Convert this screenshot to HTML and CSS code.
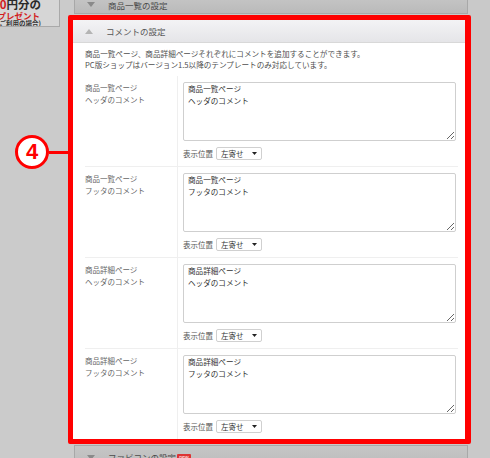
FILE: index.html
```html
<!DOCTYPE html>
<html lang="ja">
<head>
    <meta charset="UTF-8">
    <title>コメントの設定</title>
    <link rel="stylesheet" href="styles.css">
</head>
<body>
    <div class="page">
        <aside class="side">
            <div class="banner">
                <p class="b1"><span class="red">0</span>円分の</p>
                <p class="b2">プレゼント</p>
                <p class="b3">ご利用の場合)</p>
            </div>
        </aside>

        <main class="main">
            <div class="bar bar-top">
                <svg class="tri" width="8" height="5" viewBox="0 0 8 5"><path d="M0 0H8L4 5Z"/></svg>
                <span>商品一覧の設定</span>
            </div>

            <section class="focus">
                <div class="sec-head">
                    <svg class="tri up" width="8" height="5" viewBox="0 0 8 5"><path d="M0 5H8L4 0Z"/></svg>
                    <span>コメントの設定</span>
                </div>
                <div class="sec-body">
                    <p class="desc">商品一覧ページ、商品詳細ページそれぞれにコメントを追加することができます。<br>PC版ショップはバージョン1.5以降のテンプレートのみ対応しています。</p>

                    <div class="rows">
                        <div class="row">
                            <div class="label">商品一覧ページ<br>ヘッダのコメント</div>
                            <div class="field">
                                <textarea>商品一覧ページ
ヘッダのコメント</textarea>
                                <div class="pos">表示位置 <div class="select">左寄せ <svg width="5" height="3" viewBox="0 0 5 3"><path d="M0 0H5L2.5 3Z"/></svg></div></div>
                            </div>
                        </div>
                        <div class="row">
                            <div class="label">商品一覧ページ<br>フッタのコメント</div>
                            <div class="field">
                                <textarea>商品一覧ページ
フッタのコメント</textarea>
                                <div class="pos">表示位置 <div class="select">左寄せ <svg width="5" height="3" viewBox="0 0 5 3"><path d="M0 0H5L2.5 3Z"/></svg></div></div>
                            </div>
                        </div>
                        <div class="row">
                            <div class="label">商品詳細ページ<br>ヘッダのコメント</div>
                            <div class="field">
                                <textarea>商品詳細ページ
ヘッダのコメント</textarea>
                                <div class="pos">表示位置 <div class="select">左寄せ <svg width="5" height="3" viewBox="0 0 5 3"><path d="M0 0H5L2.5 3Z"/></svg></div></div>
                            </div>
                        </div>
                        <div class="row">
                            <div class="label">商品詳細ページ<br>フッタのコメント</div>
                            <div class="field">
                                <textarea>商品詳細ページ
フッタのコメント</textarea>
                                <div class="pos">表示位置 <div class="select">左寄せ <svg width="5" height="3" viewBox="0 0 5 3"><path d="M0 0H5L2.5 3Z"/></svg></div></div>
                            </div>
                        </div>
                    </div>
                </div>
            </section>

            <div class="bar">
                <svg class="tri" width="8" height="5" viewBox="0 0 8 5"><path d="M0 0H8L4 5Z"/></svg>
                <span>ファビコンの設定</span><span class="new">new</span>
            </div>
        </main>
    </div>

    <div class="callout">
        <div class="num">4</div>
        <div class="line"></div>
    </div>
</body>
</html>
```

FILE: styles.css
```css
body {
    margin: 0;
    width: 490px;
    height: 458px;
    overflow: hidden;
    background-color: #c9c9c9;
    font-family: "Noto Sans CJK JP", "Noto Sans", sans-serif;
    position: relative;
}
p {
    margin: 0;
}
.page {
    display: grid;
    grid-template-columns: 74px 394px 22px;
}
.side {
    background-color: #cbcbcb;
    overflow: hidden;
}
.banner {
    width: 80px;
    height: 27px;
    margin-left: -20px;
    padding-right: 18px;
    box-sizing: border-box;
    background-color: #d6d6d6;
    border-right: 1px solid #a9a9a9;
    border-bottom: 1px solid #a9a9a9;
    overflow: hidden;
    white-space: nowrap;
    text-align: right;
    font-weight: bold;
    color: #2a2a2a;
}
.b1 {
    font-size: 11.5px;
    line-height: 11px;
    margin-top: -1px;
}
.b2 {
    font-size: 8.5px;
    line-height: 10px;
    color: #d21c1c;
    padding-right: 1px;
}
.b3 {
    font-size: 6.5px;
    line-height: 7px;
    color: #333;
}
.red {
    color: #d21c1c;
}
.main {
    display: flex;
    flex-direction: column;
}
.bar {
    height: 22px;
    display: flex;
    align-items: center;
    background: linear-gradient(#c6c6c6, #bababa);
    border: 1px solid #a8a8a8;
    border-bottom: none;
    font-size: 8.5px;
    color: #4a4a4a;
    padding-left: 12px;
    margin-top: 1px;
}
.bar-top {
    height: 17px;
    margin-top: -4px;
    border-top: none;
    border-bottom: 1px solid #a8a8a8;
}
.tri {
    fill: #8a8a8a;
    margin-right: 13px;
}
.tri.up {
    fill: #b4b4b4;
}
.new {
    display: inline-block;
    font-size: 5px;
    line-height: 6px;
    padding: 0 2px;
    margin-left: 1px;
    background-color: #d33;
    color: #fff;
    border-radius: 1px;
}
.focus {
    margin: 1px -3px 0 -6px;
    border: 5px solid #ff0000;
    border-right-width: 6px;
    background-color: #fff;
    border-radius: 2px;
}
.sec-head {
    height: 22px;
    display: flex;
    align-items: center;
    padding-left: 12px;
    background: linear-gradient(#f3f3f5, #e5e5e8);
    border-bottom: 1px solid #d8d8d8;
    font-size: 8.5px;
    color: #555;
}
.sec-body {
    padding: 5px 7px 0 12px;
}
.desc {
    font-size: 7.6px;
    line-height: 11px;
    color: #4e4e4e;
    margin-bottom: 6px;
}
.row {
    display: grid;
    grid-template-columns: 92px 1fr;
    border-bottom: 1px solid #efefef;
}
.row:last-child {
    border-bottom: none;
}
.label {
    font-size: 7.5px;
    line-height: 12px;
    color: #666;
    padding-top: 6px;
}
.field {
    border-left: 1px solid #efefef;
    padding: 6px 2px 6px 5px;
}
textarea {
    display: block;
    width: 273px;
    height: 59px;
    box-sizing: border-box;
    margin: 0;
    padding: 0 4px;
    border: 1px solid #cfcfcf;
    border-radius: 2px;
    font-family: "Noto Sans CJK JP", "Noto Sans", sans-serif;
    font-size: 7.6px;
    line-height: 12px;
    color: #333;
}
.pos {
    display: flex;
    align-items: center;
    gap: 3px;
    margin-top: 6px;
    font-size: 7.5px;
    color: #555;
}
.select {
    width: 46px;
    height: 13px;
    box-sizing: border-box;
    display: flex;
    align-items: center;
    justify-content: space-between;
    padding: 0 4px;
    border: 1px solid #d0d0d0;
    border-radius: 2px;
    background-color: #fff;
    color: #333;
}
.select svg {
    fill: #222;
}
.callout {
    position: absolute;
    left: 15px;
    top: 135px;
    display: flex;
    align-items: center;
}
.num {
    width: 34px;
    height: 34px;
    box-sizing: border-box;
    border: 3px solid #ff0000;
    border-radius: 50%;
    background-color: #fff;
    color: #ff0000;
    font-family: "Liberation Sans", Arial, sans-serif;
    font-weight: bold;
    font-size: 22px;
    line-height: 28px;
    text-align: center;
}
.line {
    width: 19px;
    height: 3px;
    background-color: #ff0000;
}
```
